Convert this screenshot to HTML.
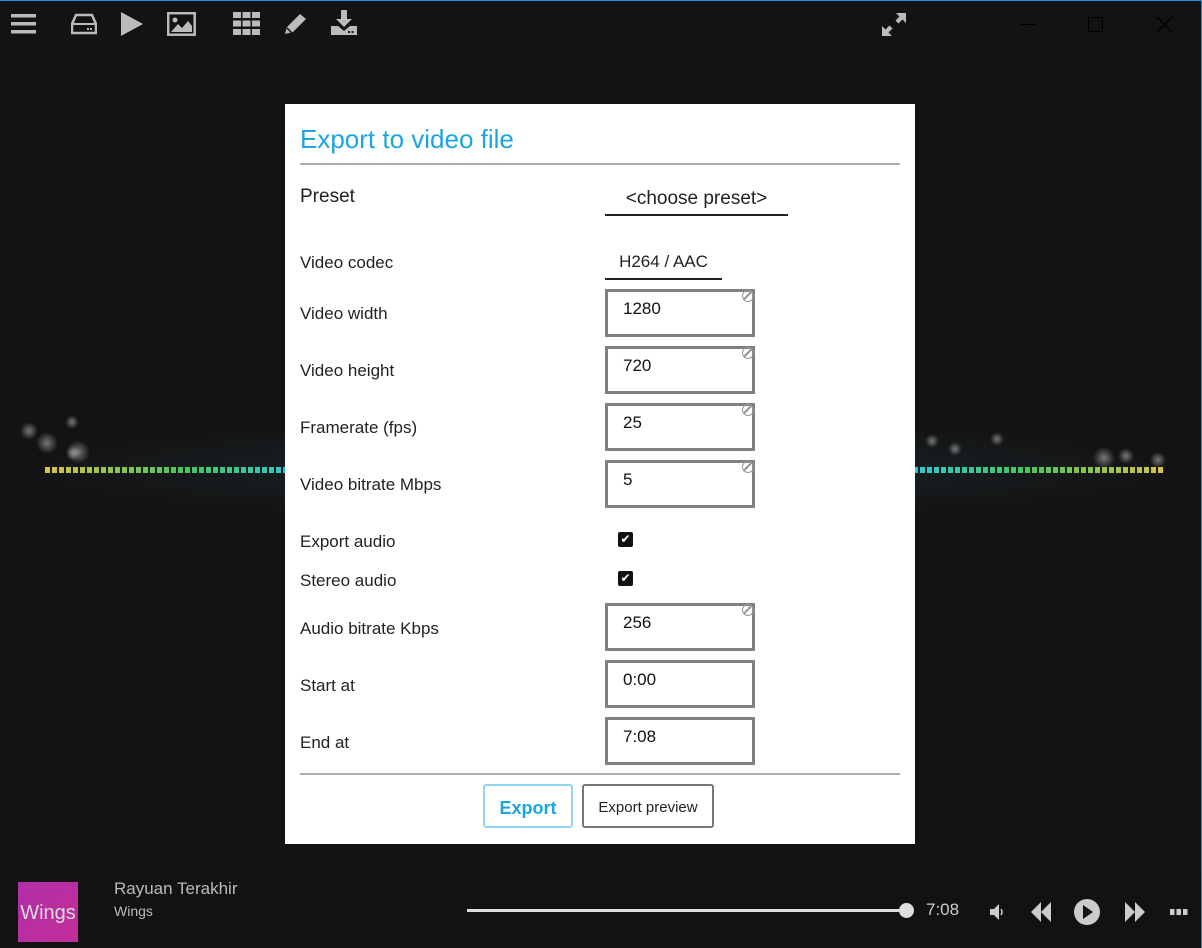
<!DOCTYPE html>
<html><head><meta charset="utf-8"><style>
*{margin:0;padding:0;box-sizing:border-box}
body{width:1202px;height:948px;background:#131313;position:relative;overflow:hidden;font-family:"Liberation Sans",sans-serif}
.topb{position:absolute;left:0;top:0;width:1202px;height:1px;background:#1e88e5}
.rb{position:absolute;right:0;top:0;width:1px;height:948px;background:#1e88e5}
.ic{position:absolute}
.glow{position:absolute;left:0;top:380px;width:1202px;height:180px;background:radial-gradient(ellipse 600px 50px at 601px 90px,rgba(60,110,140,0.22),rgba(0,0,0,0))}
.bar{position:absolute;left:45px;top:467px;width:1120px;height:6px;background:linear-gradient(90deg,#d9c24c 0%,#46c75a 12.5%,#2ec8d2 22%,#3a7fd0 50%,#2ec8d2 78%,#46c75a 87.5%,#d9c24c 100%)}
.mask{position:absolute;left:45px;top:467px;width:1120px;height:6px;background:repeating-linear-gradient(90deg,rgba(0,0,0,0) 0 5px,#171a1a 5px 7px)}
.bk{position:absolute;border-radius:50%;background:radial-gradient(circle,rgba(200,200,200,0.55),rgba(200,200,200,0) 70%)}
.dlg{position:absolute;left:285px;top:104px;width:630px;height:740px;background:#fff}
.t{position:absolute;left:15px;top:20px;font-size:26px;color:#1ba5e2}
.hr{position:absolute;left:15px;width:600px;height:2px;background:#b0b0b0}
.l{position:absolute;left:15px;font-size:17px;color:#222}
.in{position:absolute;left:320px;width:150px;height:48px;border:3px solid #808080;font-size:17px;color:#111;padding:7px 0 0 15px}
.in i{position:absolute;right:-2px;top:-2px;width:12px;height:12px;border:1.5px solid #999;border-radius:50%;background:linear-gradient(135deg,transparent 40%,#999 40% 55%,transparent 55%)}
.cb{position:absolute;left:333px;width:15px;height:15px;background:#111;border-radius:2px;color:#fff;font-size:12px;line-height:15px;text-align:center}
.sel{position:absolute;border-bottom:2px solid #222;font-size:19px;color:#222;text-align:center}
.btn{position:absolute;top:680px;height:44px;border-radius:3px;font-size:15px;text-align:center;line-height:44px}
</style></head><body>
<div class="topb"></div><div class="rb"></div>
<svg class="ic" style="left:11px;top:13px" width="25" height="22"><rect y="1" width="25" height="3.5" fill="#bbb"/><rect y="9" width="25" height="3.5" fill="#bbb"/><rect y="17" width="25" height="3.5" fill="#bbb"/></svg>
<svg class="ic" style="left:71px;top:13px" width="26" height="22"><path d="M5 2h16l4 9v9H1v-9z" fill="none" stroke="#bbb" stroke-width="2.5"/><line x1="1" y1="11" x2="25" y2="11" stroke="#bbb" stroke-width="2"/><rect x="16" y="15" width="2" height="2" fill="#bbb"/><rect x="19" y="15" width="2" height="2" fill="#bbb"/></svg>
<svg class="ic" style="left:120px;top:12px" width="24" height="24"><path d="M1 0L23 12L1 24z" fill="#bbb"/></svg>
<svg class="ic" style="left:167px;top:12px" width="29" height="24"><rect x="1.2" y="1.2" width="26.5" height="21.5" fill="none" stroke="#bbb" stroke-width="2.5"/><circle cx="8" cy="8" r="2.5" fill="#bbb"/><path d="M4 20l7-8 4 4 6-7 4 5v6z" fill="#bbb"/></svg>
<svg class="ic" style="left:233px;top:12px" width="27" height="23"><g fill="#bbb"><rect width="8" height="6"/><rect x="9.5" width="8" height="6"/><rect x="19" width="8" height="6"/><rect y="8.5" width="8" height="6"/><rect x="9.5" y="8.5" width="8" height="6"/><rect x="19" y="8.5" width="8" height="6"/><rect y="17" width="8" height="6"/><rect x="9.5" y="17" width="8" height="6"/><rect x="19" y="17" width="8" height="6"/></g></svg>
<svg class="ic" style="left:283px;top:12px" width="26" height="24"><path d="M2 22l2-7L17 2l6 5-13 13z" fill="#bbb"/><path d="M4 16l5 5" stroke="#131313" stroke-width="1.5"/></svg>
<svg class="ic" style="left:331px;top:10px" width="26" height="26"><path d="M10 0h6v9h5l-8 8-8-8h5z" fill="#bbb"/><path d="M0 16h7l6 5 6-5h7v9H0z" fill="#bbb"/><rect x="17" y="21" width="2" height="2" fill="#131313"/><rect x="20.5" y="21" width="2" height="2" fill="#131313"/></svg>
<svg class="ic" style="left:881px;top:12px" width="26" height="25"><path d="M15 1h10v10l-3.5-3.5-4 4-3-3 4-4zM11 24H1V14l3.5 3.5 4-4 3 3-4 4z" fill="#bbb"/></svg>
<div class="ic" style="left:1020px;top:24px;width:16px;height:1px;background:#000"></div>
<div class="ic" style="left:1088px;top:17px;width:15px;height:15px;border:1.3px solid #000"></div>
<svg class="ic" style="left:1156px;top:16px" width="17" height="17"><path d="M1 1l15 15M16 1L1 16" stroke="#000" stroke-width="1.3"/></svg>
<div class="glow"></div>
<div class="bk" style="left:20px;top:422px;width:18px;height:18px"></div>
<div class="bk" style="left:36px;top:432px;width:22px;height:22px"></div>
<div class="bk" style="left:66px;top:446px;width:14px;height:14px"></div>
<div class="bk" style="left:65px;top:415px;width:14px;height:14px"></div>
<div class="bk" style="left:66px;top:440px;width:24px;height:24px"></div>
<div class="bk" style="left:925px;top:434px;width:14px;height:14px"></div>
<div class="bk" style="left:948px;top:442px;width:14px;height:14px"></div>
<div class="bk" style="left:1093px;top:447px;width:22px;height:22px"></div>
<div class="bk" style="left:1118px;top:448px;width:16px;height:16px"></div>
<div class="bk" style="left:1150px;top:452px;width:16px;height:16px"></div>
<div class="bk" style="left:990px;top:432px;width:14px;height:14px"></div>
<div class="bar"></div><div class="mask"></div>
<div class="dlg">
<div class="t">Export to video file</div>
<div class="hr" style="top:59px"></div>
<div class="l" style="top:82px;font-size:19px">Preset</div>
<div class="sel" style="left:320px;top:84px;width:183px;height:28px">&lt;choose preset&gt;</div>
<div class="l" style="top:149px">Video codec</div>
<div class="sel" style="left:320px;top:148px;width:117px;height:28px;font-size:17px">H264 / AAC</div>
<div class="l" style="top:200px">Video width</div><div class="in" style="top:185px">1280<i></i></div>
<div class="l" style="top:257px">Video height</div><div class="in" style="top:242px">720<i></i></div>
<div class="l" style="top:314px">Framerate (fps)</div><div class="in" style="top:299px">25<i></i></div>
<div class="l" style="top:371px">Video bitrate Mbps</div><div class="in" style="top:356px">5<i></i></div>
<div class="l" style="top:428px">Export audio</div><div class="cb" style="top:428px">✔</div>
<div class="l" style="top:467px">Stereo audio</div><div class="cb" style="top:467px">✔</div>
<div class="l" style="top:515px">Audio bitrate Kbps</div><div class="in" style="top:499px">256<i></i></div>
<div class="l" style="top:572px">Start at</div><div class="in" style="top:556px">0:00</div>
<div class="l" style="top:629px">End at</div><div class="in" style="top:613px">7:08</div>
<div class="hr" style="top:669px"></div>
<div class="btn" style="left:198px;width:90px;border:2px solid #8fd6f4;color:#1ba5e2;font-weight:bold;font-size:18px">Export</div>
<div class="btn" style="left:297px;width:132px;border:2px solid #777;color:#222">Export preview</div>
</div>
<div class="ic" style="left:0;top:875px;width:1201px;height:73px;background:#121212"></div>
<div class="ic" style="left:18px;top:882px;width:60px;height:60px;background:linear-gradient(135deg,#b02fa8,#c42d99);color:#ddd;font-size:20px;line-height:62px;text-align:center">Wings</div>
<div class="ic" style="left:114px;top:879px;color:#bbb;font-size:17px">Rayuan Terakhir</div>
<div class="ic" style="left:114px;top:903px;color:#bbb;font-size:14px">Wings</div>
<div class="ic" style="left:467px;top:909px;width:440px;height:3px;background:#ddd"></div>
<div class="ic" style="left:899px;top:903px;width:15px;height:15px;border-radius:50%;background:#ddd"></div>
<div class="ic" style="left:926px;top:900px;color:#ccc;font-size:17px">7:08</div>
<svg class="ic" style="left:988px;top:903px" width="18" height="18"><path d="M2 6h4l5-5v16l-5-5H2z" fill="#ccc"/><path d="M13 6q2 3 0 6" stroke="#ccc" fill="none" stroke-width="1.5"/></svg>
<svg class="ic" style="left:1030px;top:902px" width="22" height="20"><path d="M11 0v20L1 10zM21 0v20L11 10z" fill="#ccc"/></svg>
<svg class="ic" style="left:1073px;top:898px" width="28" height="28"><circle cx="14" cy="14" r="13" fill="#ccc"/><path d="M10 7l10 7-10 7z" fill="#121212"/></svg>
<svg class="ic" style="left:1124px;top:902px" width="22" height="20"><path d="M1 0v20l10-10zM11 0v20l10-10z" fill="#ccc"/></svg>
<svg class="ic" style="left:1170px;top:909px" width="18" height="6"><rect width="4.5" height="6" fill="#ccc"/><rect x="6.5" width="4.5" height="6" fill="#ccc"/><rect x="13" width="4.5" height="6" fill="#ccc"/></svg>
</body></html>
